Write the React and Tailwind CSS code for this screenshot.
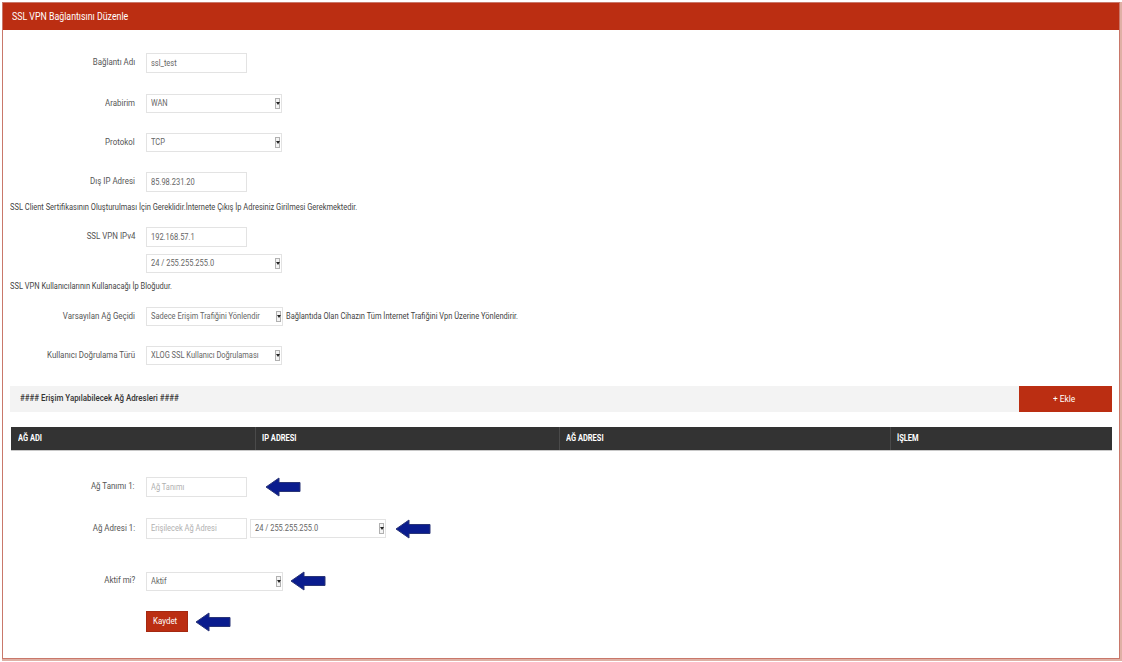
import React from "react";

const C = ({ children, right, className = "" }) => (
  <span
    className={`inline-block whitespace-nowrap scale-x-[0.88] ${right ? "origin-right" : "origin-left"} ${className}`}
  >
    {children}
  </span>
);

const Tri = () => (
  <div className="w-[5px] h-[11px] border border-[#b0b0b0] bg-[#f4f4f4] flex items-center justify-center shrink-0">
    <div className="w-0 h-0 border-l-[2px] border-r-[2px] border-t-[3px] border-l-transparent border-r-transparent border-t-[#222]" />
  </div>
);

const Input = ({ value, placeholder, w = "w-[101px]", h = "h-[20px]" }) => (
  <div className={`${h} ${w} border border-[#e3e3e3] bg-white flex items-center px-[4px] text-[8.5px] shrink-0`}>
    {value ? <C className="text-[#666]">{value}</C> : <C className="text-[#b0b0b0]">{placeholder}</C>}
  </div>
);

const Select = ({ value, w = "w-[136px]" }) => (
  <div className={`h-[19px] ${w} border border-[#e3e3e3] bg-white flex items-center pl-[4px] pr-[1px] text-[8.5px] shrink-0`}>
    <div className="flex-1 min-w-0 overflow-hidden">
      <C className="text-[#666]">{value}</C>
    </div>
    <Tri />
  </div>
);

const Label = ({ children }) => (
  <div className="w-[132px] text-right text-[9px] text-[#555] shrink-0">
    <C right>{children}</C>
  </div>
);

const Arrow = ({ className = "" }) => (
  <svg width="36" height="20" viewBox="0 0 36 20" className={className}>
    <polygon
      points="1,10 14,1 14,5.5 35,5.5 35,14.5 14,14.5 14,19"
      fill="#0a1c8e"
      stroke="#2a3577"
      strokeWidth="1"
      strokeLinejoin="miter"
    />
  </svg>
);

const Row = ({ label, children, className = "" }) => (
  <div className={`flex items-center ${className}`}>
    <Label>{label}</Label>
    <div className="ml-[11px] flex items-center">{children}</div>
  </div>
);

export default function App() {
  return (
    <div className="w-[1122px] h-[662px] bg-white font-['Roboto',sans-serif] pt-[2px] pl-[2px]">
      <div className="w-[1118px] h-[657px] border border-[#c9786a] shadow-[1px_1px_0_1px_#dfb0a5] flex flex-col">
        <div className="h-[27px] bg-[#bb2e12] flex items-center pl-[9px] text-white text-[10px]">
          <C>SSL VPN Bağlantısını Düzenle</C>
        </div>

        <Row label="Bağlantı Adı" className="mt-[23px]">
          <Input value="ssl_test" />
        </Row>
        <Row label="Arabirim" className="mt-[21px]">
          <Select value="WAN" />
        </Row>
        <Row label="Protokol" className="mt-[20px]">
          <Select value="TCP" />
        </Row>
        <Row label="Dış IP Adresi" className="mt-[20px]">
          <Input value="85.98.231.20" />
        </Row>
        <div className="mt-[9px] h-[12px] ml-[7px] text-[8.5px] text-[#444] flex items-center">
          <C>SSL Client Sertifikasının Oluşturulması İçin Gereklidir.İnternete Çıkış İp Adresiniz Girilmesi Gerekmektedir.</C>
        </div>
        <div className="flex items-start mt-[14px]">
          <div className="w-[132px] text-right text-[9px] text-[#555] shrink-0 pt-[3px]">
            <C right>SSL VPN IPv4</C>
          </div>
          <div className="ml-[11px] flex flex-col gap-[7px]">
            <Input value="192.168.57.1" />
            <Select value="24 / 255.255.255.0" />
          </div>
        </div>
        <div className="mt-[7px] h-[12px] ml-[7px] text-[8.5px] text-[#444] flex items-center">
          <C>SSL VPN Kullanıcılarının Kullanacağı İp Bloğudur.</C>
        </div>
        <Row label="Varsayılan Ağ Geçidi" className="mt-[15px]">
          <Select value="Sadece Erişim Trafiğini Yönlendir" w="w-[137px]" />
          <div className="ml-[3px] text-[8.5px] text-[#444]">
            <C>Bağlantıda Olan Cihazın Tüm İnternet Trafiğini Vpn Üzerine Yönlendirir.</C>
          </div>
        </Row>
        <Row label="Kullanıcı Doğrulama Türü" className="mt-[20px]">
          <Select value="XLOG SSL Kullanıcı Doğrulaması" />
        </Row>

        <div className="mt-[21px] mx-[7px] h-[26px] bg-[#f3f3f3] flex items-center justify-between">
          <div className="pl-[10px] text-[9px] text-[#333] font-medium">
            <C>#### Erişim Yapılabilecek Ağ Adresleri ####</C>
          </div>
          <div className="w-[93px] h-[26px] bg-[#bb2e12] text-white text-[9.5px] flex items-center justify-center">
            <C className="origin-center">+ Ekle</C>
          </div>
        </div>

        <div className="mt-[15px] ml-[8px] mr-[7px] h-[24px] bg-[#333333] border-b border-[#c8c8c8] grid grid-cols-[245px_304px_331px_1fr] text-white text-[8.5px] font-bold">
          <div className="flex items-center pl-[7px] border-r border-[#4a4a4a]"><C>AĞ ADI</C></div>
          <div className="flex items-center pl-[6px] border-r border-[#4a4a4a]"><C>IP ADRESI</C></div>
          <div className="flex items-center pl-[6px] border-r border-[#4a4a4a]"><C>AĞ ADRESI</C></div>
          <div className="flex items-center pl-[6px]"><C>İŞLEM</C></div>
        </div>

        <Row label="Ağ Tanımı 1:" className="mt-[26px]">
          <Input placeholder="Ağ Tanımı" />
          <Arrow className="ml-[18px]" />
        </Row>
        <Row label="Ağ Adresi 1:" className="mt-[21px]">
          <Input placeholder="Erişilecek Ağ Adresi" h="h-[21px]" />
          <div className="ml-[3px]">
            <Select value="24 / 255.255.255.0" />
          </div>
          <Arrow className="ml-[9px]" />
        </Row>
        <Row label="Aktif mi?" className="mt-[32px]">
          <Select value="Aktif" w="w-[137px]" />
          <Arrow className="ml-[7px]" />
        </Row>
        <div className="flex items-center mt-[20px] ml-[143px]">
          <div className="w-[42px] h-[21px] bg-[#bb2e12] border border-[#a52810] text-white text-[9px] flex items-center justify-center">
            <C className="origin-center">Kaydet</C>
          </div>
          <Arrow className="ml-[7px]" />
        </div>
      </div>
    </div>
  );
}
